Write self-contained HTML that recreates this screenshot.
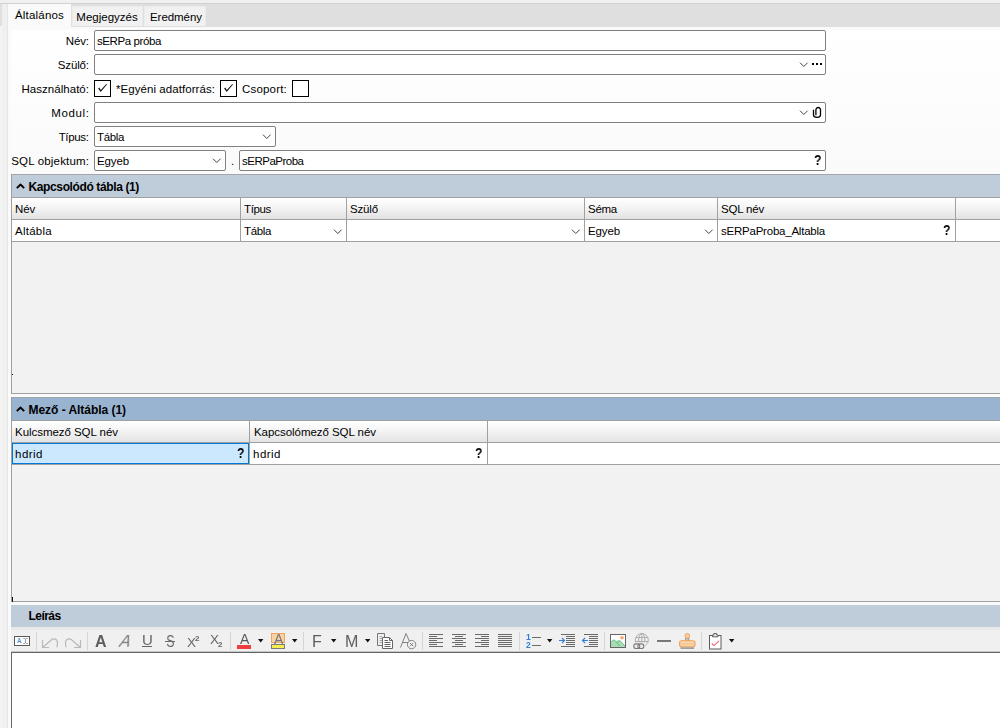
<!DOCTYPE html>
<html lang="hu"><head><meta charset="utf-8"><title>sERPa</title>
<style>
html,body{margin:0;padding:0}
body{width:1000px;height:728px;overflow:hidden;position:relative;background:#fafafa;font-family:"Liberation Sans",sans-serif;font-size:12px;color:#000;line-height:14px}
div,span,b,i{position:absolute;white-space:pre;box-sizing:border-box}
.t{height:14px;font-size:11.5px}
.inp{background:#fff;border:1px solid #808080;border-radius:2px;height:21px;left:94px}
.cb{width:17px;height:17px;border:1px solid #000;background:#fff;top:80px}
.hl{height:1px;background:#a0a0a0;left:11px;right:0}
.vl{width:1px;background:#a0a0a0}
.ch{background:linear-gradient(#ffffff 0%,#f7f7f7 35%,#e3e3e3 100%);left:12px;right:0;height:21px}
.q{font-weight:bold;font-size:14px;line-height:14px;height:14px;will-change:transform;transform:scaleX(.88);transform-origin:0 0}
svg{position:absolute;overflow:visible}
.cv{fill:none;stroke:#444;stroke-width:1}
.sp{top:632px;width:1px;height:18px;background:#d4d4d4}
.k{line-height:20px;height:20px;will-change:transform}
.da{top:639px;width:6px;height:4px;fill:#111}
</style></head><body>
<!-- window chrome -->
<div style="left:0;top:0;width:1000px;height:3px;background:#f0f0f0"></div>
<div style="left:0;top:3px;width:1000px;height:1px;background:#d2d2d2"></div>
<div style="left:0;top:4px;width:1000px;height:23px;background:#dfdfdf"></div>
<div style="left:0;top:26px;width:8px;height:702px;background:#f0f0f0"></div><div style="left:0;top:26px;width:2px;height:702px;background:#f3f3f3"></div>
<div style="left:2px;top:4px;width:6px;height:23px;background:#efefef"></div>
<div style="left:7px;top:4px;width:1px;height:724px;background:#e6e6e6"></div>
<div style="left:11px;top:30px;width:989px;height:144px;background:linear-gradient(#ffffff,#fafafa)"></div>
<!-- tabs -->
<div style="left:8px;top:4px;width:63px;height:24px;background:#fafafa"></div>
<div style="left:72px;top:6px;width:71px;height:20px;background:#f1f1f1;border:1px solid #ebebeb;border-bottom:0"></div>
<div style="left:144px;top:6px;width:62px;height:20px;background:#f1f1f1;border:1px solid #ebebeb;border-bottom:0"></div>
<!-- form -->
<div class="inp" style="top:30px;width:732px"></div>
<div class="inp" style="top:54px;width:732px"></div>
<svg style="left:799px;top:62px" width="9" height="6"><polyline class="cv" points="1,.7 4.800,4.500 8.600,.7"/></svg>
<div style="left:812px;top:63px;width:2px;height:2px;background:#000"></div>
<div style="left:816px;top:63px;width:2px;height:2px;background:#000"></div>
<div style="left:820px;top:63px;width:2px;height:2px;background:#000"></div>
<div class="cb" style="left:94px"></div>
<div class="cb" style="left:220px"></div>
<div class="cb" style="left:292px"></div>
<svg style="left:94px;top:80px" width="17" height="17"><path d="M4.100,8.500 L5.300,7.600 L6.800,10.100 L12.300,3.900 L13,4.500 L6.700,11.900 Z" fill="#151515"/></svg>
<svg style="left:220px;top:80px" width="17" height="17"><path d="M4.100,8.500 L5.300,7.600 L6.800,10.100 L12.300,3.900 L13,4.500 L6.700,11.900 Z" fill="#151515"/></svg>
<div class="inp" style="top:102px;width:732px"></div>
<svg style="left:799px;top:110px" width="9" height="6"><polyline class="cv" points="1,.7 4.800,4.500 8.600,.7"/></svg>
<svg style="left:812px;top:106px" width="10" height="13"><path d="M1.500,3.800 V9 a3.500,2.400 0 0 0 7,0 V3.700 a2.300,2.200 0 0 0 -4.600,0 V9.300" fill="none" stroke="#000" stroke-width="1.300"/></svg>
<div class="inp" style="top:126px;width:182px"></div>
<svg style="left:262px;top:134px" width="9" height="6"><polyline class="cv" points="1,.7 4.800,4.500 8.600,.7"/></svg>
<div class="inp" style="top:150px;width:132px"></div>
<svg style="left:212px;top:158px" width="9" height="6"><polyline class="cv" points="1,.7 4.800,4.500 8.600,.7"/></svg>
<div class="inp" style="top:150px;left:239px;width:587px"></div>
<!-- panel 1 -->
<div style="left:11px;top:174px;right:0;height:23px;background:#bfcddb;border-left:1px solid #a0a0a0;border-top:1px solid #a4a6a9"></div>
<svg style="left:15.5px;top:182.500px" width="9" height="6"><polyline points="0.8,5.2 4.5,1.500 8.200,5.200" fill="none" stroke="#000" stroke-width="1.800" stroke-linejoin="round"/></svg>
<div style="left:11px;top:198px;right:0;height:196px;background:#f2f2f2"></div>
<div class="ch" style="top:198px"></div>
<div style="left:12px;top:220px;right:0;height:21px;background:#fff"></div>
<div class="hl" style="top:197px"></div>
<div class="hl" style="top:219px"></div>
<div class="hl" style="top:241px"></div>
<div class="hl" style="top:393px"></div>
<div class="vl" style="left:11px;top:197px;height:197px"></div>
<div class="vl" style="left:240px;top:198px;height:43px"></div>
<div class="vl" style="left:346px;top:198px;height:43px"></div>
<div class="vl" style="left:584px;top:198px;height:43px"></div>
<div class="vl" style="left:717px;top:198px;height:43px"></div>
<div class="vl" style="left:955px;top:198px;height:43px"></div>
<svg style="left:333px;top:229px" width="9" height="6"><polyline class="cv" points="1,.7 4.800,4.500 8.600,.7"/></svg>
<svg style="left:571px;top:229px" width="9" height="6"><polyline class="cv" points="1,.7 4.800,4.500 8.600,.7"/></svg>
<svg style="left:704px;top:229px" width="9" height="6"><polyline class="cv" points="1,.7 4.800,4.500 8.600,.7"/></svg>
<div style="left:12px;top:374px;width:1px;height:1px;background:#111"></div><div style="left:12px;top:375px;width:1px;height:2px;background:#fff"></div>
<!-- panel 2 -->
<div style="left:11px;top:397px;right:0;height:23px;background:#99b4d1;border-left:1px solid #9a9da1;border-top:1px solid #a0a3a7"></div>
<svg style="left:15.5px;top:405.500px" width="9" height="6"><polyline points="0.8,5.2 4.5,1.500 8.200,5.200" fill="none" stroke="#000" stroke-width="1.800" stroke-linejoin="round"/></svg>
<div style="left:11px;top:421px;right:0;height:181px;background:#f2f2f2"></div>
<div class="ch" style="top:421px"></div>
<div style="left:12px;top:443px;right:0;height:21px;background:#fff"></div>
<div class="hl" style="top:420px"></div>
<div class="hl" style="top:442px"></div>
<div class="hl" style="top:464px"></div>
<div class="hl" style="top:601px"></div>
<div class="vl" style="left:11px;top:420px;height:182px"></div>
<div class="vl" style="left:249px;top:421px;height:43px"></div>
<div class="vl" style="left:487px;top:421px;height:43px"></div>
<div style="left:12px;top:443px;width:237px;height:21px;background:#cce8ff;border:1px solid #0078d7"></div>
<div style="left:12px;top:597px;width:1px;height:5px;background:#111"></div>
<!-- description -->
<div style="left:11px;top:605px;right:0;height:22px;background:#bfcddb"></div>
<div style="left:11px;top:627px;right:0;height:25px;background:#f0f0f0;border-top:3px solid #e9e9e9"></div>
<div style="left:11px;top:651px;right:0;height:1px;background:#c9c9c9"></div>
<div style="left:11px;top:652px;right:0;height:76px;background:#fff;border-top:1px solid #636363;border-left:1px solid #6a6a6a"></div>

<!-- texts -->
<span class="t" style="top:8px;left:15px;transform-origin:0 0;letter-spacing:0.188px;">Általános</span>
<span class="t" style="top:10px;left:76.3px;transform-origin:0 0;letter-spacing:0.013px;">Megjegyzés</span>
<span class="t" style="top:10px;left:150px;transform-origin:0 0;letter-spacing:-0.053px;">Eredmény</span>
<span class="t" style="top:34px;right:911.16px;transform-origin:100% 0;letter-spacing:-0.164px;">Név:</span>
<span class="t" style="top:58px;right:911.16px;transform-origin:100% 0;letter-spacing:-0.161px;">Szülő:</span>
<span class="t" style="top:82px;right:910.97px;transform-origin:100% 0;letter-spacing:0.031px;">Használható:</span>
<span class="t" style="top:106px;right:910.34px;transform-origin:100% 0;letter-spacing:0.661px;">Modul:</span>
<span class="t" style="top:130px;right:911.33px;transform-origin:100% 0;letter-spacing:-0.328px;">Típus:</span>
<span class="t" style="top:154px;right:910.82px;transform-origin:100% 0;letter-spacing:0.181px;">SQL objektum:</span>
<span class="t" style="top:34px;left:97px;transform-origin:0 0;letter-spacing:-0.401px;">sERPa próba</span>
<span class="t" style="top:82px;left:116px;transform-origin:0 0;letter-spacing:0.062px;">*Egyéni adatforrás:</span>
<span class="t" style="top:82px;left:242px;transform-origin:0 0;letter-spacing:0.191px;">Csoport:</span>
<span class="t" style="top:130px;left:97px;transform-origin:0 0;letter-spacing:-0.356px;">Tábla</span>
<span class="t" style="top:154px;left:97px;transform-origin:0 0;letter-spacing:-0.122px;">Egyeb</span>
<span class="t" style="top:154px;left:231px;transform-origin:0 0;">.</span>
<span class="t" style="top:154px;left:242px;transform-origin:0 0;letter-spacing:-0.498px;">sERPaProba</span>
<b class="t" style="top:180px;left:28.5px;transform-origin:0 0;letter-spacing:-0.376px;font-size:12px;">Kapcsolódó tábla (1)</b>
<span class="t" style="top:202px;left:15px;transform-origin:0 0;letter-spacing:-0.151px;">Név</span>
<span class="t" style="top:202px;left:244px;transform-origin:0 0;letter-spacing:-0.353px;">Típus</span>
<span class="t" style="top:202px;left:350px;transform-origin:0 0;letter-spacing:-0.156px;">Szülő</span>
<span class="t" style="top:202px;left:588px;transform-origin:0 0;letter-spacing:-0.262px;">Séma</span>
<span class="t" style="top:202px;left:721px;transform-origin:0 0;letter-spacing:-0.19px;">SQL név</span>
<span class="t" style="top:224px;left:15px;transform-origin:0 0;letter-spacing:0.261px;">Altábla</span>
<span class="t" style="top:224px;left:244px;transform-origin:0 0;letter-spacing:-0.356px;">Tábla</span>
<span class="t" style="top:224px;left:588px;transform-origin:0 0;letter-spacing:-0.122px;">Egyeb</span>
<span class="t" style="top:224px;left:721px;transform-origin:0 0;letter-spacing:-0.225px;">sERPaProba_Altabla</span>
<b class="t" style="top:403px;left:28.5px;transform-origin:0 0;letter-spacing:-0.041px;font-size:12px;">Mező - Altábla (1)</b>
<span class="t" style="top:425px;left:15px;transform-origin:0 0;letter-spacing:-0.045px;">Kulcsmező SQL név</span>
<span class="t" style="top:425px;left:254px;transform-origin:0 0;letter-spacing:-0.048px;">Kapcsolómező SQL név</span>
<span class="t" style="top:447px;left:15px;transform-origin:0 0;letter-spacing:0.484px;">hdrid</span>
<span class="t" style="top:447px;left:253px;transform-origin:0 0;letter-spacing:0.484px;">hdrid</span>
<b class="t" style="top:609px;left:28.5px;transform-origin:0 0;letter-spacing:-0.56px;font-size:12px;">Leírás</b>
<!-- toolbar -->
<div class="sp" style="left:36px"></div><div class="sp" style="left:87px"></div><div class="sp" style="left:230px"></div><div class="sp" style="left:303px"></div>
<div class="sp" style="left:422px"></div><div class="sp" style="left:519px"></div><div class="sp" style="left:604px"></div><div class="sp" style="left:701px"></div>
<!-- source/edit toggle -->
<div style="left:14px;top:636px;width:16px;height:10px;background:#fff;border:1px solid #5a5a5a"></div>
<span class="k" style="left:16.700px;top:637px;font-size:8px;line-height:8px;font-weight:bold;color:#4a8fdb;transform:scaleX(.8);transform-origin:0 0">A</span>
<svg style="left:23px;top:638px" width="5" height="6"><path d="M.3,.5H2M3,.5H4.700M2.500,.8V5.200M.3,5.500H2M3,5.500H4.700" fill="none" stroke="#9c9c9c" stroke-width="1"/></svg>
<!-- undo / redo -->
<svg style="left:41px;top:636px" width="18" height="13"><path d="M1.5,4 V11.5 H8 M1.5,11.5 L10.5,3.8 C13,1.8 16.5,3.2 16.5,6.5 C16.5,8.5 16.2,10 15.8,11.2" fill="none" stroke="#b9b9b9" stroke-width="1.2"/></svg>
<svg style="left:64px;top:636px" width="18" height="13"><path d="M16.5,4 V11.5 H10 M16.5,11.5 L7.5,3.8 C5,1.8 1.5,3.2 1.5,6.5 C1.5,8.5 1.8,10 2.2,11.2" fill="none" stroke="#b9b9b9" stroke-width="1.2"/></svg>
<!-- letters -->
<b class="k" style="left:94.800px;top:632px;font-size:16px;color:#5e5e5e">A</b>
<i class="k" style="left:119.500px;top:632px;font-size:16px;color:#747474;transform:skewX(-12deg)">A</i>
<span class="k" style="left:141.5px;top:630px;font-size:15px;color:#666">U</span>
<div style="left:142px;top:646px;width:10px;height:1px;background:#666"></div>
<span class="k" style="left:164.700px;top:632px;font-size:16px;color:#6a6a6a;transform:scaleX(.78)">S</span>
<div style="left:165px;top:641px;width:10px;height:1px;background:#6a6a6a"></div>
<span class="k" style="left:186.5px;top:633px;font-size:13.5px;color:#666">X</span><b class="k" style="left:195px;top:629px;font-size:8px;color:#666">2</b>
<span class="k" style="left:209.5px;top:630px;font-size:13.5px;color:#666">X</span><b class="k" style="left:218px;top:635px;font-size:8px;color:#666">2</b>
<span class="k" style="left:239.5px;top:629px;font-size:14px;color:#5a5a5a">A</span>
<div style="left:237px;top:645px;width:14px;height:4px;background:#f03e3e"></div>
<div style="left:271px;top:633px;width:14px;height:10px;background:#f8d3a4;border:1px solid #f0a35e"></div>
<span class="k" style="left:273.500px;top:629px;font-size:14px;color:#777">A</span>
<div style="left:271px;top:644px;width:14px;height:5px;background:#f6ee4e;border:1px solid #7a7a7a"></div>
<span class="k" style="left:312px;top:632px;font-size:16px;color:#5e5e5e">F</span>
<span class="k" style="left:344.5px;top:632px;font-size:16px;color:#5e5e5e">M</span>
<!-- dropdown arrows -->
<svg class="da" style="left:258px"><path d="M0,0H5.4L2.7,3.4Z"/></svg><svg class="da" style="left:292px"><path d="M0,0H5.4L2.7,3.4Z"/></svg>
<svg class="da" style="left:331px"><path d="M0,0H5.4L2.7,3.4Z"/></svg><svg class="da" style="left:365px"><path d="M0,0H5.4L2.7,3.4Z"/></svg>
<svg class="da" style="left:547px"><path d="M0,0H5.4L2.7,3.4Z"/></svg><svg class="da" style="left:729px"><path d="M0,0H5.4L2.7,3.4Z"/></svg>
<!-- copy -->
<svg style="left:377px;top:633px" width="17" height="17"><path d="M5.5,12.5 H0.5 V0.5 H7.5 V4" fill="none" stroke="#777" stroke-width="1"/><path d="M2.5,3.5H5M2.5,5.5H5M2.5,7.5H5M2.5,9.5H5" stroke="#aaa" stroke-width="1"/><path d="M5.5,4.5 H12.5 L15.5,7.5 V15.5 H5.5 Z" fill="#fff" stroke="#666" stroke-width="1"/><path d="M12.5,4.5 V7.5 H15.5" fill="none" stroke="#666" stroke-width="1"/><path d="M7.5,7.5H11M7.5,9.5H13.5M7.5,11.5H13.5M7.5,13.5H13.5" stroke="#666" stroke-width="1"/></svg>
<!-- clear format -->
<svg style="left:400px;top:633px" width="17" height="17"><path d="M0.5,14.5 L6,0.5 L10.2,10 M2.6,9.5 H8.5" fill="none" stroke="#808080" stroke-width="1"/><circle cx="11.6" cy="11.6" r="4.2" fill="#f0f0f0" stroke="#808080" stroke-width="1"/><path d="M10,10 L13.2,13.2 M13.2,10 L10,13.2" stroke="#808080" stroke-width="1"/></svg>
<!-- align -->
<svg style="left:429px;top:634px" width="14" height="13"><path d="M0,.5H14M0,2.5H8M0,4.5H14M0,6.5H8M0,8.5H14M0,10.5H8M0,12.5H14" stroke="#6a6a6a" stroke-width="1"/></svg>
<svg style="left:452px;top:634px" width="14" height="13"><path d="M0,.5H14M3,2.5H11M0,4.5H14M3,6.5H11M0,8.5H14M3,10.5H11M0,12.5H14" stroke="#6a6a6a" stroke-width="1"/></svg>
<svg style="left:475px;top:634px" width="14" height="13"><path d="M0,.5H14M6,2.5H14M0,4.5H14M6,6.5H14M0,8.5H14M6,10.5H14M0,12.5H14" stroke="#6a6a6a" stroke-width="1"/></svg>
<svg style="left:498px;top:634px" width="14" height="13"><path d="M0,.5H14M0,2.5H14M0,4.5H14M0,6.5H14M0,8.5H14M0,10.5H14M0,12.5H14" stroke="#6a6a6a" stroke-width="1"/></svg>
<!-- numbered list -->
<b class="k" style="left:525.5px;top:632.5px;font-size:8.5px;line-height:8.5px;color:#2f80d6">1</b>
<b class="k" style="left:525.5px;top:641px;font-size:8.5px;line-height:8.5px;color:#2f80d6">2</b>
<div style="left:532px;top:637px;width:9px;height:1px;background:#6a6a6a"></div>
<div style="left:532px;top:645px;width:9px;height:1px;background:#6a6a6a"></div>
<!-- indent / outdent -->
<svg style="left:559px;top:634px" width="16" height="13"><path d="M2,.5H16M7,2.5H16M7,4.5H16M7,6.5H16M7,8.5H16M7,10.5H16M2,12.5H16" stroke="#6a6a6a" stroke-width="1"/><path d="M0,6.5H5.5M3,4L5.5,6.5L3,9" fill="none" stroke="#2f80d6" stroke-width="1.1"/></svg>
<svg style="left:582px;top:634px" width="16" height="13"><path d="M2,.5H16M7,2.5H16M7,4.5H16M7,6.5H16M7,8.5H16M7,10.5H16M2,12.5H16" stroke="#6a6a6a" stroke-width="1"/><path d="M0.5,6.5H6M3,4L0.5,6.5L3,9" fill="none" stroke="#2f80d6" stroke-width="1.1"/></svg>
<!-- image -->
<svg style="left:610px;top:634px" width="16" height="14"><rect x=".5" y=".5" width="15" height="13" fill="#fff" stroke="#666"/><path d="M1,13 V8.5 C2.5,5.5 4.5,5.5 6.5,8 C8.5,6 11,6.5 12.5,9.5 L15,12 V13Z" fill="#a8dcb4"/><path d="M1,8.5 C2.5,5.5 4.5,5.500 6.5,8 L9.500,12 M6.500,8 C8.500,6 11,6.500 12.500,9.500 L15,12" fill="none" stroke="#5fba7d" stroke-width="1"/><circle cx="12" cy="3.700" r="1.800" fill="#f6a86a"/></svg>
<!-- link -->
<svg style="left:633px;top:633px" width="17" height="17"><g fill="none" stroke="#adadad" stroke-width="1"><circle cx="8.800" cy="7" r="6.500"/><ellipse cx="8.800" cy="7" rx="3.100" ry="6.500"/><path d="M8.800,.5 V13.500"/><path d="M3,4.500 H14.600"/><path d="M2.400,8.500 H15.200"/></g><path d="M0,9.500 H11.500 L13,11 L10.500,14.500 L8,17 H0 Z" fill="#f0f0f0"/><g fill="none" stroke="#7d7d7d" stroke-width="1.100"><rect x=".8" y="10.900" width="6" height="4.600" rx="2.300"/><rect x="4.800" y="10.900" width="6" height="4.600" rx="2.300"/></g></svg>
<!-- hr -->
<div style="left:657px;top:640px;width:14px;height:2px;background:#787878"></div>
<!-- stamp -->
<svg style="left:679px;top:633px" width="17" height="17"><rect x="6.700" y="4.800" width="3.200" height="3.600" fill="#c4c4c4" stroke="#8a8a8a" stroke-width=".8"/><circle cx="8.300" cy="2.900" r="2.400" fill="#fbcf9f" stroke="#f0a25a" stroke-width="1"/><rect x=".6" y="7.700" width="15.400" height="6" rx="2" fill="#fbd6ab" stroke="#efa055" stroke-width="1.100"/><path d="M1.500,11H15" stroke="#f5bd85" stroke-width="1"/><path d="M1.500,15.100H15" stroke="#7a7a7a" stroke-width="1.200"/></svg>
<!-- paste special -->
<svg style="left:709px;top:633px" width="13" height="17"><rect x=".5" y="2.500" width="11.500" height="13.500" fill="#fff" stroke="#5a5a5a"/><path d="M3.500,3.800 V2 H4.800 V.6 H7.700 V2 H9 V3.800 Z" fill="#f0f0f0" stroke="#5a5a5a" stroke-width="1"/><path d="M2.700,10.500 L5,12.600 L10,7.800" fill="none" stroke="#e9606c" stroke-width="1.100"/></svg>
<!-- lookup buttons -->
<span class="q" style="left:814px;top:153px">?</span>
<span class="q" style="left:942.500px;top:223px">?</span>
<span class="q" style="left:236.500px;top:446px">?</span>
<span class="q" style="left:474.500px;top:446px">?</span>

</body></html>
